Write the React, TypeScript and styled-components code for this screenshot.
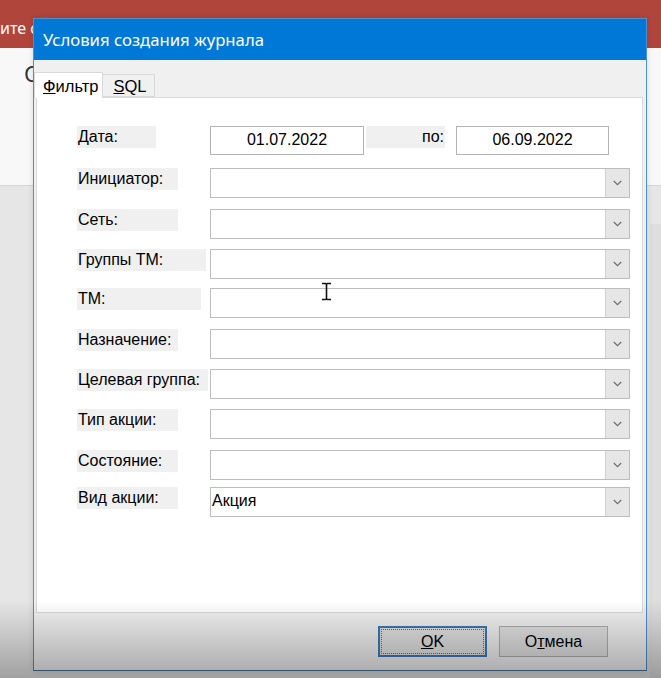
import React from 'react';
import styled, { createGlobalStyle } from 'styled-components';

const Global = createGlobalStyle`
  html, body { margin: 0; padding: 0; }
  body {
    width: 661px;
    height: 678px;
    overflow: hidden;
    font-family: "Liberation Sans", Arial, sans-serif;
  }
  * { box-sizing: border-box; }
`;

const Page = styled.div`
  position: relative;
  width: 661px;
  height: 678px;
  overflow: hidden;
  display: flex;
  flex-direction: column;
  background: #e6e6e6;
`;

const AppHeader = styled.div`
  height: 48px;
  flex: none;
  background: #b0453c;
  color: #ffffff;
  font-family: "Noto Sans", sans-serif;
  font-size: 16px;
  display: flex;
  align-items: center;
  padding-top: 7px;
  white-space: nowrap;
`;

const AppToolbar = styled.div`
  height: 138px;
  flex: none;
  background: #f8f8f8;
  border-bottom: 1px solid #d6d6d6;
  padding: 10px 0 0 24px;
  font-family: "Noto Sans", sans-serif;
  font-size: 22px;
  color: #333333;
`;

const AppBody = styled.div`
  flex: 1;
  background: #e6e6e6;
  display: flex;
  justify-content: flex-end;
`;

const SideStrip = styled.div`
  width: 11px;
  margin-top: 38px;
  background: #dedede;
`;

const Vignette = styled.div`
  position: absolute;
  inset: 0;
  pointer-events: none;
  z-index: 20;
  background: linear-gradient(
    to bottom,
    rgba(0, 0, 0, 0) 600px,
    rgba(0, 0, 0, 0.3) 678px
  );
`;

const Dialog = styled.div`
  position: absolute;
  left: 33px;
  top: 18px;
  width: 614px;
  height: 653px;
  border: 1px solid #4f8fcc;
  border-bottom-color: #4b6f92;
  background: #f0f0f0;
  display: flex;
  flex-direction: column;
  box-shadow: 0 0 6px rgba(0, 0, 0, 0.12);
  z-index: 5;
`;

const TitleBar = styled.div`
  height: 41px;
  flex: none;
  background: #0078d7;
  color: #ffffff;
  font-family: "Noto Sans", sans-serif;
  font-size: 16.7px;
  display: flex;
  align-items: center;
  padding-left: 9px;
  padding-bottom: 1px;
`;

const Body = styled.div`
  flex: 1;
  display: flex;
  flex-direction: column;
  padding: 12px 3px 0 2px;
`;

const TabStrip = styled.div`
  height: 25px;
  flex: none;
  display: flex;
  align-items: flex-end;
  margin-left: -2px;
  position: relative;
  z-index: 2;
`;

const Tab = styled.div<{ $active?: boolean }>`
  height: ${(p) => (p.$active ? '26px' : '23px')};
  margin-bottom: ${(p) => (p.$active ? '-1px' : '0')};
  padding: 0 ${(p) => (p.$active ? '4px' : '8px')} 0 ${(p) => (p.$active ? '8px' : '10px')};
  background: ${(p) => (p.$active ? '#ffffff' : '#f0f0f0')};
  border: 1px solid #d9d9d9;
  border-bottom: ${(p) => (p.$active ? 'none' : '1px solid #d9d9d9')};
  border-left: ${(p) => (p.$active ? '1px solid #d9d9d9' : 'none')};
  font-size: 16.5px;
  color: #000;
  display: flex;
  align-items: center;
  padding-top: ${(p) => (p.$active ? '2px' : '1px')};
`;

const Panel = styled.div`
  height: 516px;
  flex: none;
  background: #ffffff;
  border: 1px solid #d9d9d9;
  padding: 28px 12px 0 40px;
  display: flex;
  flex-direction: column;
`;

const Row = styled.div<{ $gap: number }>`
  display: grid;
  grid-template-columns: 133px 1fr;
  align-items: start;
  margin-top: ${(p) => p.$gap}px;
`;

const LabelBox = styled.div<{ $w: number; $right?: boolean }>`
  width: ${(p) => p.$w}px;
  height: 22px;
  background: #f0f0f0;
  font-size: 16px;
  line-height: 22px;
  color: #000;
  padding: 0 1px 0 1px;
  text-align: ${(p) => (p.$right ? 'right' : 'left')};
  white-space: nowrap;
`;

const DateLine = styled.div`
  display: flex;
  align-items: flex-start;
`;

const DateBox = styled.div<{ $w: number }>`
  width: ${(p) => p.$w}px;
  height: 29px;
  border: 1px solid #b4b4b4;
  background: #fff;
  font-size: 16px;
  line-height: 25px;
  text-align: center;
  color: #000;
`;

const ToLabel = styled(LabelBox)`
  margin: 0 11px 0 2px;
  padding-right: 1px;
`;

const Combo = styled.div`
  height: 30px;
  border: 1px solid #bdbdbd;
  background: #fff;
  display: flex;
`;

const ComboValue = styled.div`
  flex: 1;
  font-size: 16px;
  line-height: 25px;
  padding-left: 1px;
  color: #000;
`;

const ComboButton = styled.div`
  width: 24px;
  background: #e6e6e6;
  border-left: 1px solid #d2d2d2;
  display: flex;
  align-items: center;
  justify-content: center;
`;

const Footer = styled.div`
  flex: 1;
  display: flex;
  justify-content: flex-end;
  align-items: flex-start;
  gap: 12px;
  padding: 13px 35px 0 0;
`;

const Button = styled.div<{ $primary?: boolean }>`
  position: relative;
  width: 109px;
  height: 31px;
  background: #e1e1e1;
  border: ${(p) => (p.$primary ? '2px solid #3a78b4' : '1px solid #adadad')};
  font-size: 16px;
  color: #000;
  display: flex;
  align-items: center;
  justify-content: center;
  ${(p) =>
    p.$primary
      ? `&::after {
    content: '';
    position: absolute;
    inset: 1px;
    border: 1px dotted #6a6a6a;
  }`
      : ''}
`;

const Cursor = styled.svg`
  position: absolute;
  left: 321px;
  top: 282px;
  z-index: 10;
`;

const Chevron = () => (
  <svg width="9" height="6" viewBox="0 0 9 6">
    <path d="M0.8 1 L4.5 4.6 L8.2 1" fill="none" stroke="#6e6e6e" strokeWidth="1.2" />
  </svg>
);

type Field = { label: string; w: number; gap: number; value?: string };

const fields: Field[] = [
  { label: 'Инициатор:', w: 101, gap: 13 },
  { label: 'Сеть:', w: 101, gap: 11 },
  { label: 'Группы ТМ:', w: 129, gap: 10 },
  { label: 'ТМ:', w: 124, gap: 9 },
  { label: 'Назначение:', w: 101, gap: 11 },
  { label: 'Целевая группа:', w: 131, gap: 10 },
  { label: 'Тип акции:', w: 101, gap: 10 },
  { label: 'Состояние:', w: 101, gap: 11 },
  { label: 'Вид акции:', w: 101, gap: 7, value: 'Акция' },
];

export default function App() {
  return (
    <>
      <Global />
      <Page>
        <AppHeader>ите с</AppHeader>
        <AppToolbar>С</AppToolbar>
        <AppBody>
          <SideStrip />
        </AppBody>

        <Dialog>
          <TitleBar>Условия создания журнала</TitleBar>
          <Body>
            <TabStrip>
              <Tab $active>
                <span><u>Ф</u>ильтр</span>
              </Tab>
              <Tab>
                <span><u>S</u>QL</span>
              </Tab>
            </TabStrip>
            <Panel>
              <Row $gap={0}>
                <LabelBox $w={79}>Дата:</LabelBox>
                <DateLine>
                  <DateBox $w={154}>01.07.2022</DateBox>
                  <ToLabel $w={79} $right>по:</ToLabel>
                  <DateBox $w={153}>06.09.2022</DateBox>
                </DateLine>
              </Row>
              {fields.map((f) => (
                <Row key={f.label} $gap={f.gap}>
                  <LabelBox $w={f.w}>{f.label}</LabelBox>
                  <Combo>
                    <ComboValue>{f.value ?? ''}</ComboValue>
                    <ComboButton>
                      <Chevron />
                    </ComboButton>
                  </Combo>
                </Row>
              ))}
            </Panel>
            <Footer>
              <Button $primary>
                <span><u>O</u>K</span>
              </Button>
              <Button>
                <span>О<u>т</u>мена</span>
              </Button>
            </Footer>
          </Body>
        </Dialog>

        <Cursor width="11" height="19" viewBox="0 0 11 19">
          <path
            d="M1 1.5 H4.5 Q5.5 1.5 5.5 2.8 Q5.5 1.5 6.5 1.5 H10 M5.5 2.5 V16.5 M1 17.5 H4.5 Q5.5 17.5 5.5 16.2 Q5.5 17.5 6.5 17.5 H10"
            fill="none"
            stroke="#111"
            strokeWidth="1.6"
          />
        </Cursor>

        <Vignette />
      </Page>
    </>
  );
}
